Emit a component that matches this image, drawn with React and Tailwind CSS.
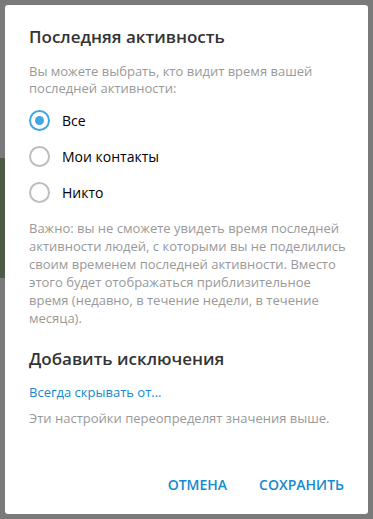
import { useState } from 'react';

const OPTIONS = ['Все', 'Мои контакты', 'Никто'];

const Radio = ({ checked }) => (
  <span
    className={`flex h-[21px] w-[21px] shrink-0 items-center justify-center rounded-full border-2 ${
      checked ? 'border-[#40a7e3]' : 'border-[#bdbdbd]'
    }`}
  >
    {checked && <span className="h-[9px] w-[9px] rounded-full bg-[#40a7e3]" />}
  </span>
);

const App = () => {
  const [selected, setSelected] = useState(0);

  return (
    <div
      className="flex h-[519px] w-[373px] overflow-hidden bg-[#7a7a7a]"
      style={{ fontFamily: '"Open Sans", "Noto Sans", sans-serif' }}
    >
      {/* dimmed background peeking on the left */}
      <div className="flex w-[5px] shrink-0 flex-col pt-[158px]">
        <div className="h-[120px] bg-[#4d5a44]" />
      </div>

      <div className="my-[5px] mr-[5px] flex w-[363px] flex-col rounded-[3px] bg-white pt-5 pr-4 pb-[19px] pl-6">
        <h1 className="text-[17px] leading-6 font-semibold text-[#333]">Последняя активность</h1>
        <p className="mt-[14px] pr-8 text-[13px] leading-[17px] text-[#999]">
          Вы можете выбрать, кто видит время вашей последней активности:
        </p>

        <div className="mt-[5px] flex flex-col">
          {OPTIONS.map((opt, idx) => (
            <button
              key={opt}
              onClick={() => setSelected(idx)}
              className="flex h-9 items-center gap-[12px] text-left"
            >
              <Radio checked={selected === idx} />
              <span className="text-[14px] text-black">{opt}</span>
            </button>
          ))}
        </div>

        <p className="mt-[9px] text-[13px] leading-[18px] text-[#999]">
          Важно: вы не сможете увидеть время последней активности людей, с которыми вы не поделились своим временем последней активности. Вместо этого будет отображаться приблизительное время (недавно, в течение недели, в течение месяца).
        </p>

        <h2 className="mt-5 text-[17px] leading-6 font-semibold text-[#333]">Добавить исключения</h2>
        <a className="mt-3 text-[13px] leading-[18px] text-[#168acd]">Всегда скрывать от...</a>
        <p className="mt-2 text-[13px] leading-[18px] text-[#999]">
          Эти настройки переопределят значения выше.
        </p>

        <div className="mt-auto flex justify-end gap-8 pr-2">
          <button className="text-[14px] font-semibold text-[#168acd] uppercase">Отмена</button>
          <button className="text-[14px] font-semibold text-[#168acd] uppercase">Сохранить</button>
        </div>
      </div>
    </div>
  );
};

export default App;
